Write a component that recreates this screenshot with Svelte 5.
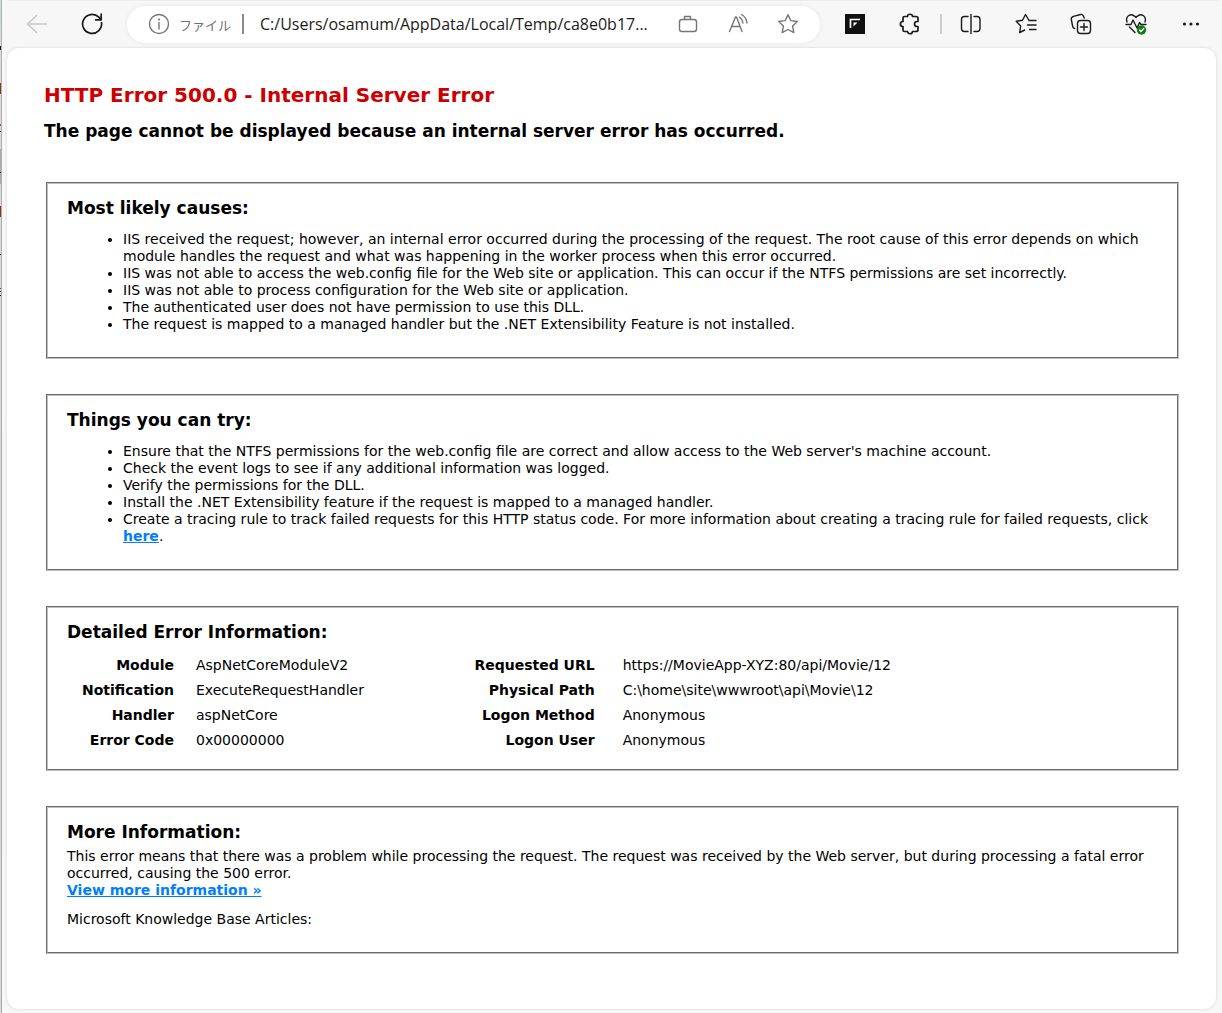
<script>
  const causes = [
    'IIS received the request; however, an internal error occurred during the processing of the request. The root cause of this error depends on which module handles the request and what was happening in the worker process when this error occurred.',
    'IIS was not able to access the web.config file for the Web site or application. This can occur if the NTFS permissions are set incorrectly.',
    'IIS was not able to process configuration for the Web site or application.',
    'The authenticated user does not have permission to use this DLL.',
    'The request is mapped to a managed handler but the .NET Extensibility Feature is not installed.'
  ];
  const remedies = [
    "Ensure that the NTFS permissions for the web.config file are correct and allow access to the Web server's machine account.",
    'Check the event logs to see if any additional information was logged.',
    'Verify the permissions for the DLL.',
    'Install the .NET Extensibility feature if the request is mapped to a managed handler.'
  ];
  const requestRows = [
    ['Module', 'AspNetCoreModuleV2'],
    ['Notification', 'ExecuteRequestHandler'],
    ['Handler', 'aspNetCore'],
    ['Error Code', '0x00000000']
  ];
  const targetRows = [
    ['Requested URL', 'https://MovieApp-XYZ:80/api/Movie/12'],
    ['Physical Path', 'C:\\home\\site\\wwwroot\\api\\Movie\\12'],
    ['Logon Method', 'Anonymous'],
    ['Logon User', 'Anonymous']
  ];
  let address = 'C:/Users/osamum/AppData/Local/Temp/ca8e0b17...';
</script>

{#snippet details(rows, kind)}
  <table class={kind}>
    <tbody>
      {#each rows as [name, value]}
        <tr><th scope="row">{name}</th><td>{value}</td></tr>
      {/each}
    </tbody>
  </table>
{/snippet}

<div class="window">
  <header class="toolbar">
    <button class="tool" aria-label="Back" disabled>
      <svg viewBox="0 0 22 22"><path d="M20.500 11H1.500M10.500 2.500L1.500 11l9 8.500" stroke="#c8c8c8" /></svg>
    </button>
    <button class="tool" aria-label="Refresh">
      <svg viewBox="0 0 22 22" class="refresh"><path d="M20.500 9.500A9.500 9.500 0 1 1 17.800 4.200L19.800 6.300M20.200 1v5.800h-5.600" /></svg>
    </button>
    <div class="address">
      <button class="info" aria-label="Site information">
        <svg viewBox="0 0 22 22"><circle cx="11" cy="11" r="9.500" /><path d="M11 9.500v6.500" /><circle class="dot" cx="11" cy="6.500" r="1.100" /></svg>
      </button>
      <label class="scheme" for="url">ファイル</label>
      <span class="bar"></span>
      <input id="url" type="text" bind:value={address} />
      <button class="inner" aria-label="Shopping">
        <svg viewBox="0 0 22 22"><rect x="2.500" y="6.500" width="17" height="12" rx="2.500" /><path d="M7.500 6.500v-3h6v3" /></svg>
      </button>
      <button class="inner" aria-label="Read aloud">
        <svg viewBox="0 0 22 22"><path d="M2.500 18.500L8.500 4h1l5.500 14.500M4.600 13.500h8.300M12.500 4.200q3 2 3.500 5.800M14.500 1.500q5 2.800 5.500 8.500" /></svg>
      </button>
      <button class="inner" aria-label="Add to favorites">
        <svg viewBox="0 0 22 22"><path d="M11 1.700l2.800 5.900 6.500.9-4.700 4.600 1.200 6.500-5.800-3.100-5.800 3.100 1.200-6.500-4.700-4.600 6.500-.9z" /></svg>
      </button>
    </div>
    <div class="tools">
      <button class="tool" aria-label="Workspace">
        <svg viewBox="0 0 22 22"><rect x="1" y="1" width="20" height="20" fill="#111" stroke="none" /><path d="M6.500 15V6.500H16" stroke="#fff" stroke-width="1.700" stroke-linecap="butt" stroke-linejoin="miter" /><path d="M9.500 9.500h4l-4 4z" fill="#fff" stroke="none" /></svg>
      </button>
      <button class="tool" aria-label="Extensions">
        <svg viewBox="0 0 22 22" class="puzzle"><path d="M5.500 3.500h3c0-3 5-3 5 0h3.500q2 0 2 2v3h-1c-3.300 0-3.300 5 0 5h1v3q0 2-2 2h-3.500c0 3-5 3-5 0h-3q-1.500 0-1.500-1.500v-3.500c-3.500 0-3.500-5 0-5V5q0-1.500 1.500-1.500z" /></svg>
      </button>
      <span class="divider"></span>
      <button class="tool" aria-label="Split screen">
        <svg viewBox="0 0 22 22"><path d="M8 3.500H4.500q-3 0-3 3v9q0 3 3 3H8M14 3.500h3q3 0 3 3v9q0 3-3 3h-3M11 1.500v19" /></svg>
      </button>
      <button class="tool" aria-label="Favorites">
        <svg viewBox="0 0 22 22"><path d="M14 7.500L10.500 1.500 7.500 7.300l-6.300 1 4.500 4.700-1 6.500 5-2.500M14 7.500h7M12.500 12H21M14.500 16.500H21" /></svg>
      </button>
      <button class="tool" aria-label="Collections">
        <svg viewBox="0 0 22 22"><rect x="7.500" y="7.500" width="13" height="13" rx="3" /><path d="M14 10.500v7M10.500 14h7M4.500 15.500Q3 15 2.700 13.500L1.300 6.500Q1 4 3.500 3.300l7-1.800q2.500-.5 3.200 2l.5 1.500" /></svg>
      </button>
      <button class="tool" aria-label="Browser essentials">
        <svg viewBox="0 0 22 22"><path d="M2 9C0 3 6-.5 10 3.500l1 1 1-1C16-.5 22 3 20 9M1 11.500h5l2-4.500 4 8 2.500-5.500 1.500 2h5M4.500 14l5.500 5.500" /><circle cx="16.500" cy="17" r="4.700" fill="#107c10" stroke="none" /><path d="M14.500 17l1.500 1.500 2.700-3" stroke="#fff" /></svg>
      </button>
      <button class="tool" aria-label="Settings and more">
        <svg viewBox="0 0 22 22" class="more"><circle cx="4.500" cy="11" r="1.600" /><circle cx="11" cy="11" r="1.600" /><circle cx="17.500" cy="11" r="1.600" /></svg>
      </button>
    </div>
  </header>

  <main>
    <h2>HTTP Error 500.0 - Internal Server Error</h2>
    <h3 class="summary">The page cannot be displayed because an internal server error has occurred.</h3>

    <section>
      <h3>Most likely causes:</h3>
      <ul>
        {#each causes as cause}<li>{cause}</li>{/each}
      </ul>
    </section>

    <section>
      <h3>Things you can try:</h3>
      <ul>
        {#each remedies as remedy}<li>{remedy}</li>{/each}
        <li>Create a tracing rule to track failed requests for this HTTP status code. For more information about creating a tracing rule for failed requests, click <a href="#tracing">here</a>.</li>
      </ul>
    </section>

    <section class="detail-section">
      <h3>Detailed Error Information:</h3>
      <div class="details">
        {@render details(requestRows, 'request')}
        {@render details(targetRows, 'target')}
      </div>
    </section>

    <section class="last">
      <h3>More Information:</h3>
      <p>This error means that there was a problem while processing the request. The request was received by the Web server, but during processing a fatal error occurred, causing the 500 error.<br /><a href="#more">View more information »</a></p>
      <p>Microsoft Knowledge Base Articles:</p>
    </section>
  </main>
</div>

<style>
  :global(body) {
    margin: 0;
  }
  .window {
    box-sizing: border-box;
    min-height: 100vh;
    display: flex;
    flex-direction: column;
    padding: 0 6px 4px 7px;
    background:
      linear-gradient(
        #c4dcdc 26px, #dadada 26px 46px, #12124a 46px 50px, #dadada 50px 83px,
        #8a3a0c 83px 94px, #dadada 94px 124px, #a85a30 124px 126px, #dadada 126px 131px,
        #333 131px 132px, #dadada 132px 149px, #aaa 149px 172px, #111 172px 173px,
        #aaa 173px 184px, #dadada 184px 206px, #8a3a0c 206px 217px, #dadada 217px 254px,
        #111 254px 255px, #dadada 255px 288px, #8a3a0c 288px 289px, #dadada 289px 291px,
        #333 291px 292px, #dadada 292px 295px, #111 295px 296px, #dadada 296px
      ) 0 0 / 1px 100% no-repeat,
      linear-gradient(#b0b0b0, #a8a8a8) 1px 0 / 1px 100% no-repeat,
      #f7f7f7;
    font-family: Verdana, 'DejaVu Sans', sans-serif;
    font-size: 14px;
    line-height: 17px;
    color: #000;
  }
  .toolbar {
    display: flex;
    align-items: center;
    height: 48px;
    margin-right: -2px;
    padding-left: 2px;
    box-shadow: inset 0 1px #ededed;
  }
  button {
    padding: 0;
    border: 0;
    background: none;
    display: flex;
    align-items: center;
    justify-content: center;
    flex: none;
  }
  svg {
    width: 22px;
    height: 22px;
    fill: none;
    stroke: #1b1b1b;
    stroke-width: 1.4;
    stroke-linecap: round;
    stroke-linejoin: round;
  }
  .tool {
    width: 55px;
    height: 40px;
  }
  .refresh,
  .puzzle {
    stroke-width: 1.7;
  }
  .more {
    fill: #1b1b1b;
    stroke: none;
  }
  .address {
    flex: 1;
    min-width: 0;
    display: flex;
    align-items: center;
    height: 37px;
    margin: 0 7px 0 8px;
    padding: 0 7px 0 21px;
    box-sizing: border-box;
    border-radius: 19px;
    background: #fff;
    box-shadow: 0 0 5px #e6e6e6;
    font-family: 'Segoe UI', 'Open Sans', 'Noto Sans CJK JP', sans-serif;
    font-size: 16px;
  }
  .address svg {
    stroke: #767676;
  }
  .address .dot {
    fill: #767676;
    stroke: none;
  }
  .scheme {
    margin-left: 9px;
    width: 51px;
    color: #707070;
    font-family: 'Noto Sans CJK JP', sans-serif;
    font-size: 13px;
    white-space: nowrap;
  }
  .bar {
    width: 2px;
    height: 20px;
    margin: 0 16px 0 12px;
    background: #8a8a8a;
  }
  input {
    flex: 1;
    min-width: 0;
    padding: 0;
    border: 0;
    outline: 0;
    background: none;
    color: #1b1b1b;
    font: inherit;
  }
  .inner {
    width: 50px;
    height: 34px;
  }
  .tools {
    display: flex;
    align-items: center;
  }
  .divider {
    width: 2px;
    height: 20px;
    margin: 0 1px 0 3px;
    background: #cfcfcf;
  }
  main {
    flex: 1;
    padding: 35px 37px 20px;
    border-radius: 12px;
    background: #fff;
    box-shadow: 0 0 3px #cfcfcf;
  }
  h2,
  h3,
  p,
  ul {
    margin: 0;
  }
  h2 {
    color: #c00;
    font-size: 20px;
    line-height: 24px;
  }
  h3 {
    font-size: 17px;
    line-height: 20px;
  }
  .summary {
    margin: 14px 0 41px;
  }
  section {
    margin: 0 0 35px 2px;
    padding: 14px 19px 24px;
    border: 2px groove #c0c0c0;
  }
  ul {
    margin-top: 13px;
    padding-left: 56px;
  }
  a {
    color: #007eff;
    font-weight: bold;
  }
  .detail-section {
    padding-bottom: 16px;
  }
  .details {
    display: flex;
    margin-top: 11px;
  }
  table {
    border-collapse: collapse;
  }
  th,
  td {
    padding: 4px 0;
    text-align: left;
  }
  th {
    text-align: right;
  }
  .request {
    width: 37%;
  }
  .request th {
    width: 107px;
    padding-right: 22px;
  }
  .target th {
    width: 124px;
    padding-right: 28px;
  }
  .last {
    margin-bottom: 0;
  }
  p {
    margin-top: 6px;
  }
  p + p {
    margin-top: 12px;
  }
</style>
